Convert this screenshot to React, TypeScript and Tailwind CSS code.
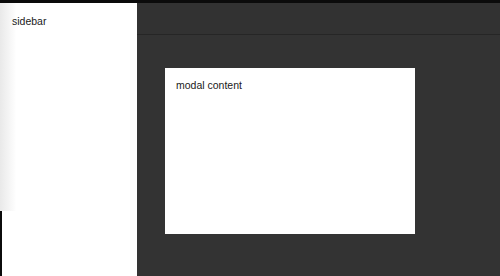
const App: React.FC = () => {
  return (
    <div
      className="h-[276px] w-[500px] overflow-hidden bg-[#0b0b0b] pt-[3px] flex"
      style={{ fontFamily: '"Liberation Sans", Arial, sans-serif' }}
    >
      {/* Sidebar */}
      <div className="w-[137px] h-full flex flex-col">
        <div className="h-[208px] bg-gradient-to-r from-[#e9e9e9] via-white via-[12%] to-white px-3 pt-[11px]">
          <p className="text-[10.5px] text-[#1a1a1a] leading-[14px]">sidebar</p>
        </div>
        <div className="flex-1 ml-[2px] bg-white"></div>
      </div>

      {/* Main */}
      <div className="flex-1 h-full bg-[#333333] flex flex-col">
        <div className="h-[32px] shrink-0 bg-[#323232] border-b border-[#262626]"></div>
        <div className="pl-[28px] pt-[33px]">
          <div className="w-[250px] h-[166px] bg-white px-[11px] pt-[10px]">
            <p className="text-[10.5px] text-[#1a1a1a] leading-[14px]">modal content</p>
          </div>
        </div>
      </div>
    </div>
  );
};

export default App;
